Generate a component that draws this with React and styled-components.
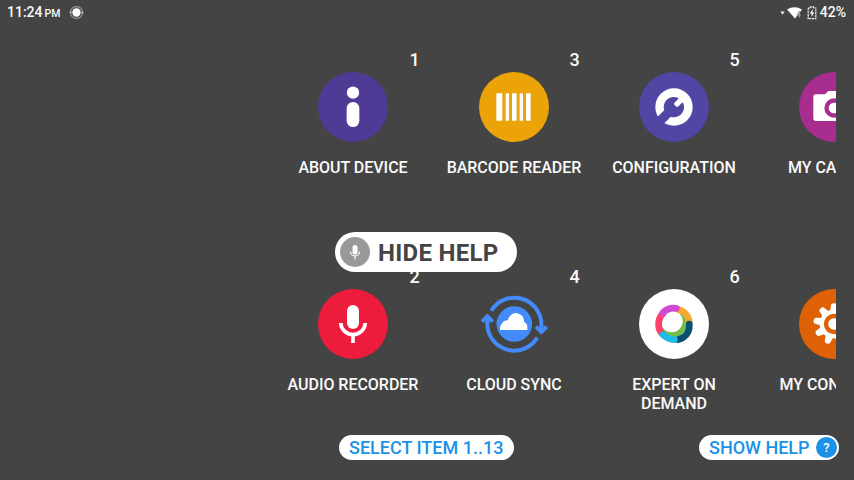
import React from "react";
import styled, { createGlobalStyle } from "styled-components";

const GlobalStyle = createGlobalStyle`
  * { box-sizing: border-box; }
  body { margin: 0; background: #444444; }
`;

const Screen = styled.div`
  position: relative;
  display: flex;
  flex-direction: column;
  width: 854px;
  height: 480px;
  overflow: hidden;
  background: #444444;
  color: #fafafa;
  font-family: Roboto, sans-serif;
  font-weight: 500;
`;

const StatusBar = styled.header`
  display: flex;
  justify-content: space-between;
  height: 24px;
  padding: 0 8px 0 7px;
  font-size: 14px;
  line-height: 25px;
`;

const StatusGroup = styled.div`
  display: flex;
  align-items: center;
  height: 25px;
`;

const Meridiem = styled.span`
  margin: 2px 9px 0 2px;
  font-size: 10.5px;
`;

const StatusIcon = styled.svg`
  display: block;
  flex: none;
  margin-right: ${(p) => p.$gap || 0}px;
`;

const AppGrid = styled.main`
  display: grid;
  grid-template-columns: 162px repeat(3, 160px);
  grid-template-rows: repeat(2, 217px);
  width: 564px;
  height: 411px;
  margin-left: 272px;
  overflow: hidden;
`;

const Tile = styled.div`
  display: flex;
  flex-direction: column;
  align-items: center;
  padding-top: 25px;
`;

const TileNumber = styled.div`
  align-self: flex-end;
  width: 24.5px;
  height: 23px;
  font-size: 18px;
  line-height: 21px;
`;

const TileIcon = styled.svg`
  display: block;
  width: 70px;
  height: 70px;
  flex: none;
`;

const TileLabel = styled.div`
  max-width: ${(p) => p.$width || 150}px;
  margin-top: 16px;
  font-size: 16px;
  line-height: 19px;
  letter-spacing: -0.02px;
  text-align: center;
`;

const HideHelp = styled.button`
  position: absolute;
  left: 335px;
  top: 232px;
  display: flex;
  align-items: center;
  gap: 8px;
  width: 182px;
  height: 40px;
  padding: 0 5px;
  border: 0;
  border-radius: 20px;
  background: #fff;
  color: #444444;
  font: 700 24px/40px Roboto, sans-serif;
  letter-spacing: 0.3px;
  white-space: nowrap;
`;

const HideHelpText = styled.span`
  padding-top: 1px;
`;

const Footer = styled.footer`
  display: flex;
  justify-content: space-between;
  width: 500px;
  margin-left: 339px;
`;

const Pill = styled.button`
  display: flex;
  align-items: center;
  justify-content: space-between;
  width: ${(p) => p.$width}px;
  height: 25px;
  padding: 0 ${(p) => p.$right}px 0 10px;
  border: 0;
  border-radius: 13px;
  background: #fff;
  color: #1a92e8;
  font: 500 18px/25px Roboto, sans-serif;
  white-space: nowrap;
`;

const HelpBadge = styled.span`
  width: 21px;
  height: 21px;
  border-radius: 50%;
  background: #1a92e8;
  color: #fff;
  font-size: 13px;
  line-height: 21px;
  text-align: center;
`;

const Disc = ({ fill }) => <circle cx="105" cy="105" r="105" fill={fill} />;

const InfoArt = () => (
  <>
    <Disc fill="#4f3a96" />
    <circle cx="105" cy="62" r="18.5" fill="#fff" />
    <rect x="86" y="90" width="38" height="75" rx="19" fill="#fff" />
  </>
);

const BarcodeArt = () => (
  <>
    <Disc fill="#eba307" />
    <path fill="#fff" d="M52 64h18v82H52zM80 64h10v82H80zM99 64h14v82H99zM122 64h10v82h-10zM141 64h14v82h-14z" />
  </>
);

const WrenchArt = () => (
  <>
    <Disc fill="#5047a5" />
    <circle cx="105" cy="105" r="56" fill="#fff" />
    <g transform="rotate(45 105 105)" fill="#5047a5">
      <rect x="91" y="118" width="28" height="52" />
      <path d="M94 77 Q97 76 97 80 V97 Q105 103 113 97 V80 Q113 76 116 77 A30.500 30.500 0 1 1 94 77Z" />
    </g>
  </>
);

const CameraArt = () => (
  <>
    <Disc fill="#a72e8e" />
    <path fill="#fff" d="M51 67H78L88 57H122L132 67H159Q167 67 167 75V139Q167 147 159 147H51Q43 147 43 139V75Q43 67 51 67Z" />
    <circle cx="105" cy="108" r="22.5" fill="#fff" stroke="#a72e8e" strokeWidth="13" />
  </>
);

const MicArt = () => (
  <>
    <Disc fill="#ee1c3c" />
    <rect x="87" y="48" width="36" height="72" rx="18" fill="#fff" />
    <path d="M68.500 102a36.500 34.500 0 0 0 73 0M105 136v26" fill="none" stroke="#fff" strokeWidth="11" />
  </>
);

const CloudSyncArt = () => (
  <>
    <circle cx="106" cy="105" r="53.500" fill="#428bf9" />
    <path fill="#fff" d="M63 123V118Q64 101 82 94H87A23 23 0 0 1 135 99Q145 103 145 114V123Z" />
    <g fill="none" stroke="#428bf9" strokeWidth="12">
      <path d="M37 65A81 81 0 0 1 187 113V131" />
      <path d="M175 146A81 81 0 0 1 25 99V80" />
      <path d="M171 113L187 129L203 113" />
      <path d="M9 98L25 82L41 98" />
    </g>
  </>
);

const ExpertArt = () => (
  <>
    <Disc fill="#fff" />
    <circle cx="104" cy="104" r="40" fill="#73bd4b" />
    <circle cx="98" cy="97" r="33" fill="#fff" />
    <g fill="none" strokeWidth="20" strokeLinecap="round">
      <path d="M114 60A46 46 0 0 1 151 97" stroke="#faa831" />
      <path d="M73 72Q57 87 59 112Q61 126 70 135" stroke="#ff416b" />
      <path d="M112 58Q88 55 72 71" stroke="#cf4ad5" />
      <path d="M151 105Q153 132 133 145Q125 150 115 152" stroke="#07506f" />
      <path d="M72 137Q86 151 106 152" stroke="#1ebbe9" />
    </g>
  </>
);

const toothAngles = [0, 40, 80, 120, 160, 200, 240, 280, 320];

const GearArt = () => (
  <>
    <Disc fill="#df6106" />
    <circle cx="105" cy="105" r="43" fill="#fff" />
    {toothAngles.map((angle) => (
      <path
        key={angle}
        transform={`rotate(${angle} 105 105)`}
        d="M93 68L96 50Q96 43 105 43Q114 43 114 50L117 68Z"
        fill="#fff"
      />
    ))}
    <circle cx="105" cy="105" r="24" fill="#fff" stroke="#df6106" strokeWidth="13" />
  </>
);

const apps = [
  { number: 1, label: "ABOUT DEVICE", Art: InfoArt },
  { number: 3, label: "BARCODE READER", Art: BarcodeArt },
  { number: 5, label: "CONFIGURATION", Art: WrenchArt },
  { number: 7, label: "MY CAMERA", Art: CameraArt },
  { number: 2, label: "AUDIO RECORDER", Art: MicArt },
  { number: 4, label: "CLOUD SYNC", Art: CloudSyncArt },
  { number: 6, label: "EXPERT ON DEMAND", Art: ExpertArt, width: 110 },
  { number: 8, label: "MY CONTROLS", Art: GearArt },
];

export default function App() {
  return (
    <>
      <GlobalStyle />
      <Screen>
        <StatusBar>
          <StatusGroup>
            <span>11:24</span>
            <Meridiem>PM</Meridiem>
            <StatusIcon width="15" height="15" viewBox="0 0 15 15">
              <circle cx="7.500" cy="7.500" r="6" fill="none" stroke="#8a8a8a" strokeWidth="1.500" />
              <path d="M0 8l1.500-2L3 8zM12 7h3l-1.500 2z" fill="#b8b8b8" />
              <circle cx="7.500" cy="7.500" r="4.200" fill="#fff" />
            </StatusIcon>
          </StatusGroup>
          <StatusGroup>
            <StatusIcon $gap={2} width="5" height="5" viewBox="0 0 5 5">
              <path d="M.3 1.500h4.400L2.500 4.800z" fill="#eee" />
            </StatusIcon>
            <StatusIcon $gap={5} width="15" height="12" viewBox="0 0 15 12">
              <path d="M0 2.500Q7.500-2 15 2.500L8 11.500Z" fill="#fff" />
              <path d="M12.500 4L9.800 8H14M12.500 4V10.500" stroke="#999" strokeWidth="1" fill="none" />
            </StatusIcon>
            <StatusIcon $gap={3} width="10" height="14" viewBox="0 0 10 14">
              <path d="M1.200 2H3.500V.8H6.500V2H8.800V12.700H1.200Z" fill="none" stroke="#eee" strokeWidth="1.200" strokeDasharray="2.200 .6" />
              <path d="M5.800 3L2.800 7.500H4.600V11L7.300 6.500H5.500Z" fill="#fff" />
            </StatusIcon>
            <span>42%</span>
          </StatusGroup>
        </StatusBar>

        <AppGrid>
          {apps.map(({ number, label, Art, width }) => (
            <Tile key={number}>
              <TileNumber>{number}</TileNumber>
              <TileIcon viewBox="0 0 210 210">
                <Art />
              </TileIcon>
              <TileLabel $width={width}>{label}</TileLabel>
            </Tile>
          ))}
        </AppGrid>

        <Footer>
          <Pill $width={175} $right={10}>SELECT ITEM 1..13</Pill>
          <Pill $width={140} $right={2}>
            SHOW HELP
            <HelpBadge>?</HelpBadge>
          </Pill>
        </Footer>

        <HideHelp>
          <svg width="30" height="30" viewBox="0 0 30 30">
            <circle cx="15" cy="15" r="15" fill="#999" />
            <rect x="12.500" y="8" width="5" height="9.500" rx="2.500" fill="#fff" />
            <path d="M10.500 14.500a4.500 4.500 0 0 0 9 0M15 19v3.500" fill="none" stroke="#fff" strokeWidth="1.200" />
          </svg>
          <HideHelpText>HIDE HELP</HideHelpText>
        </HideHelp>
      </Screen>
    </>
  );
}
